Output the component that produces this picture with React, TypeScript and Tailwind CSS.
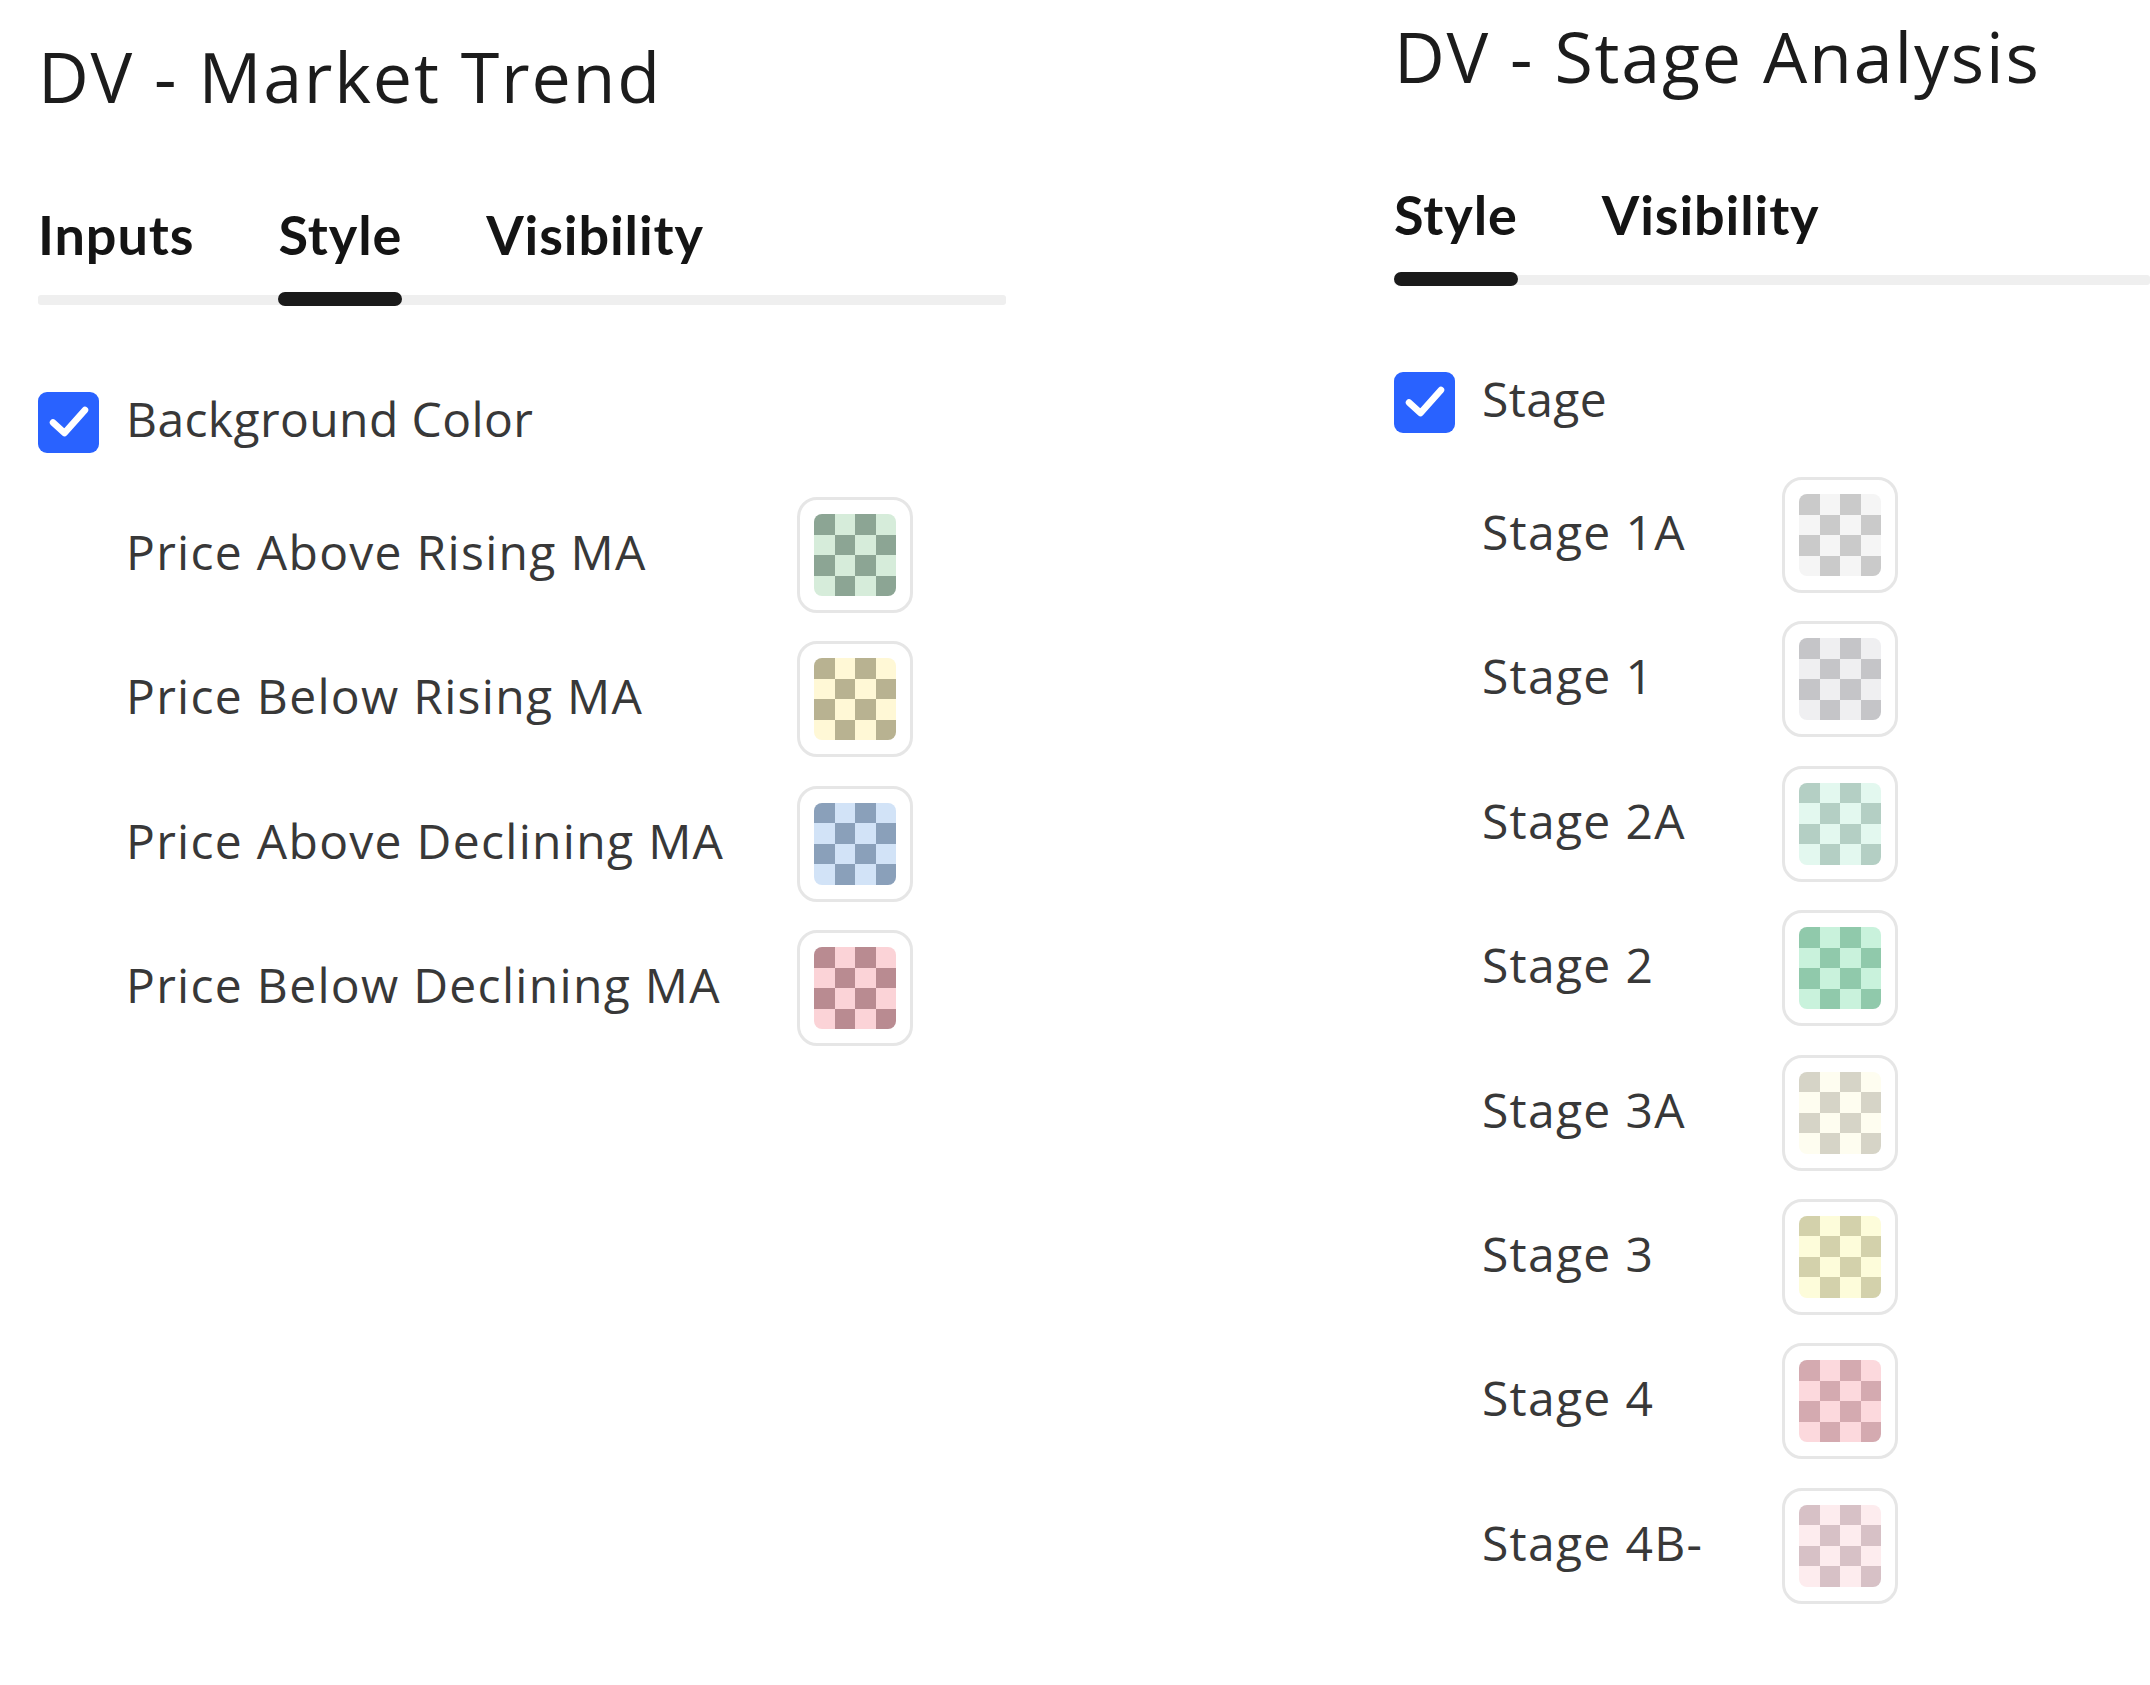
import React from "react";

interface SwatchRow {
  label: string;
  dark: string;
  light: string;
}

interface PanelProps {
  title: string;
  tabs: string[];
  activeTab: string;
  checkLabel: string;
  rows: SwatchRow[];
  labelWidth: string;
  className?: string;
}

const marketRows: SwatchRow[] = [
  { label: "Price Above Rising MA", dark: "#8ca594", light: "#d6ecda" },
  { label: "Price Below Rising MA", dark: "#b8b291", light: "#fff8d6" },
  { label: "Price Above Declining MA", dark: "#8aa0ba", light: "#d2e3f7" },
  { label: "Price Below Declining MA", dark: "#b98b91", light: "#fbd3d7" },
];

const stageRows: SwatchRow[] = [
  { label: "Stage 1A", dark: "#cacaca", light: "#f5f5f5" },
  { label: "Stage 1", dark: "#c5c5c8", light: "#efeff1" },
  { label: "Stage 2A", dark: "#b4cfc4", light: "#e3f8ef" },
  { label: "Stage 2", dark: "#90c9ab", light: "#c9f2dc" },
  { label: "Stage 3A", dark: "#d6d4c7", light: "#fefdf0" },
  { label: "Stage 3", dark: "#d3d1ab", light: "#fdfcda" },
  { label: "Stage 4", dark: "#d4aab0", light: "#fcd9dd" },
  { label: "Stage 4B-", dark: "#d7c1c6", light: "#fdecee" },
];

function Swatch({ dark, light }: { dark: string; light: string }) {
  return (
    <div className="w-[116px] h-[116px] shrink-0 rounded-[20px] border-[3px] border-[#e6e6e6] bg-white p-[14px]">
      <div className="grid grid-cols-4 grid-rows-4 w-full h-full rounded-[8px] overflow-hidden">
        {Array.from({ length: 16 }).map((_, i) => {
          const r = Math.floor(i / 4);
          const c = i % 4;
          return (
            <div key={i} style={{ backgroundColor: (r + c) % 2 === 0 ? dark : light }} />
          );
        })}
      </div>
    </div>
  );
}

function Checkbox() {
  return (
    <div className="w-[61px] h-[61px] shrink-0 rounded-[9px] bg-[#2962ff] flex items-center justify-center">
      <svg width="61" height="61" viewBox="0 0 61 61" fill="none">
        <path
          d="M15 30.5 L26.5 41 L47 18"
          stroke="white"
          strokeWidth="6.5"
          strokeLinecap="round"
          strokeLinejoin="round"
        />
      </svg>
    </div>
  );
}

function Panel({ title, tabs, activeTab, checkLabel, rows, labelWidth, className }: PanelProps) {
  return (
    <div className={`flex flex-col font-['Open_Sans',sans-serif] ${className ?? ""}`}>
      {/* Title */}
      <h1 className="text-[70px] leading-[70px] tracking-[1.8px] text-[#1c1c1c] whitespace-nowrap">{title}</h1>

      {/* Tabs */}
      <div className="relative mt-[97px] flex gap-[84px]">
        <div className="absolute left-0 right-0 bottom-[1px] h-[10px] rounded-[3px] bg-[#efefef]" />
        {tabs.map((tab) => (
          <div key={tab} className="relative flex flex-col gap-[31px]">
            <span className="font-['Lato',sans-serif] font-bold text-[54px] leading-[53px] tracking-[0.9px] text-[#141414] whitespace-nowrap">
              {tab}
            </span>
            <div
              className={`h-[14px] rounded-full ${
                tab === activeTab ? "bg-[#1a1a1a]" : "bg-transparent"
              }`}
            />
          </div>
        ))}
      </div>

      {/* Toggle */}
      <div className="mt-[86px] flex items-center gap-[27px]">
        <Checkbox />
        <span className="pb-[8px] text-[48px] leading-[48px] tracking-[0.4px] text-[#383838] whitespace-nowrap">
          {checkLabel}
        </span>
      </div>

      {/* Color rows */}
      <div className="mt-[44px] pl-[88px] flex flex-col gap-[28.4px]">
        {rows.map((row) => (
          <div key={row.label} className="flex items-center">
            <span
              className={`${labelWidth} shrink-0 pb-[6px] text-[48px] leading-[48px] tracking-[1.3px] text-[#383838] whitespace-nowrap`}
            >
              {row.label}
            </span>
            <Swatch dark={row.dark} light={row.light} />
          </div>
        ))}
      </div>
    </div>
  );
}

export default function App() {
  return (
    <div className="w-[2150px] h-[1685px] bg-white overflow-hidden flex items-start">
      <Panel
        className="ml-[38px] w-[968px] shrink-0 pt-[41px]"
        title="DV - Market Trend"
        tabs={["Inputs", "Style", "Visibility"]}
        activeTab="Style"
        checkLabel="Background Color"
        rows={marketRows}
        labelWidth="w-[671px]"
      />
      <Panel
        className="ml-[388px] flex-1 min-w-0 pt-[21px]"
        title="DV - Stage Analysis"
        tabs={["Style", "Visibility"]}
        activeTab="Style"
        checkLabel="Stage"
        rows={stageRows}
        labelWidth="w-[300px]"
      />
    </div>
  );
}
